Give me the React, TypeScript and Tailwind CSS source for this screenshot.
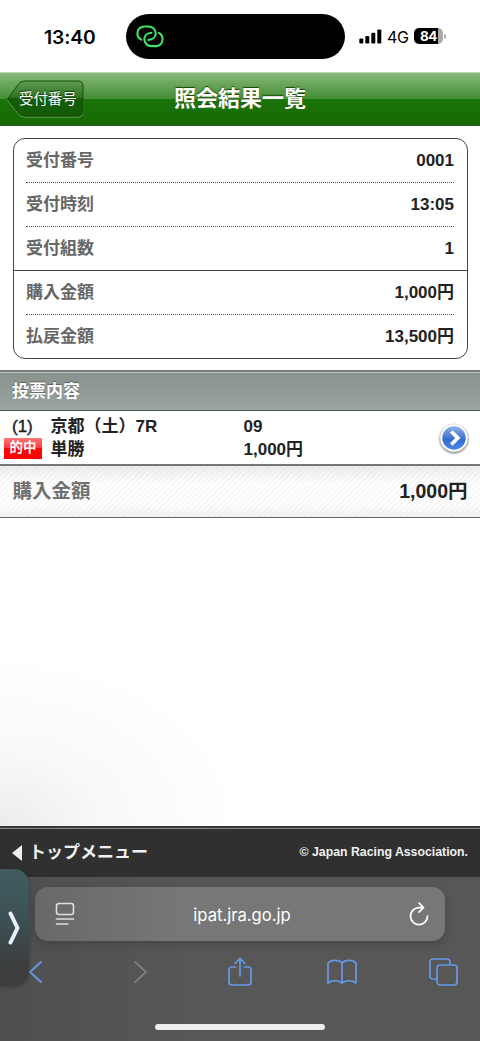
import React from "react";

const JP = "font-['Liberation_Sans','Noto_Sans_CJK_JP',sans-serif]";

function StatusBar() {
  return (
    <div className="flex h-[72px] shrink-0 items-start bg-white pt-3.5 font-['Inter',sans-serif]">
      <div className="flex h-[46px] w-[126px] items-center pl-[44px] text-[19.3px] font-semibold tracking-[-0.1px] text-black">
        13:40
      </div>
      <div className="flex h-[45px] w-[219px] items-center rounded-full bg-black pl-[10px]">
        <svg width="28" height="23" viewBox="0 0 28 23" fill="none" stroke="#3ce468" strokeWidth="2.1" strokeLinecap="round">
          <path d="M5.200 14.700C2.900 13.400 1.400 11 1.400 8.400C1.400 4.400 4.300 1.500 8.300 1.500H12.600C16.600 1.500 19.700 4.500 19.700 8.300C19.700 11.800 16.800 14.600 12.600 14.900" />
          <path d="M22.800 7.900C25.100 9.200 26.600 11.600 26.600 14.200C26.600 18.200 23.700 21.100 19.700 21.100H15.400C11.400 21.100 8.300 18.100 8.300 14.300C8.300 10.800 11.200 8 15.400 7.700" />
        </svg>
      </div>
      <div className="flex h-[44px] items-center pl-[14px]">
        <svg width="23" height="15" viewBox="0 0 23 15" fill="black">
          <rect x="0.3" y="9.4" width="4" height="5" rx="1.2" />
          <rect x="6.3" y="6.9" width="4" height="7.5" rx="1.2" />
          <rect x="12.3" y="3.8" width="4" height="10.6" rx="1.2" />
          <rect x="18.3" y="0.4" width="4" height="14" rx="1.2" />
        </svg>
        <span className="mt-px ml-[5px] w-[27px] text-[16px] tracking-[-0.3px] text-black">4G</span>
        <div className="flex h-4 w-[29px] items-center justify-center rounded-[5px] bg-[linear-gradient(90deg,#000_0_84%,#aaa_84%)] text-[13.500px] font-bold tracking-[-0.4px] text-white">
          84
        </div>
        <span className="ml-px h-[5px] w-[2px] rounded-r-full bg-[#aaa]" />
      </div>
    </div>
  );
}

function Header() {
  return (
    <header className="relative flex h-[54px] shrink-0 items-center justify-center border-t border-b border-t-[#bddab3] border-b-[#2d5227] bg-[linear-gradient(180deg,#87b979_0%,#458d35_50%,#1a750b_50%,#166900_100%)]">
      <svg className="absolute top-[7px] left-[6px]" width="79" height="39" viewBox="0 0 79 39">
        <defs>
          <linearGradient id="back" x1="0" y1="0" x2="0" y2="1">
            <stop offset="0" stopColor="#5f9b50" />
            <stop offset="0.49" stopColor="#2d701f" />
            <stop offset="0.5" stopColor="#135c06" />
            <stop offset="1" stopColor="#145b05" />
          </linearGradient>
        </defs>
        <path d="M1.500 19L13 3.500Q15.500 1 19 1H72Q77 1 77 6V31Q77 36 72 36H19Q15.500 36 13 33.500Z" fill="none" stroke="#68a35c" transform="translate(0 1.200)" />
        <path d="M1.500 19L13 3.500Q15.500 1 19 1H72Q77 1 77 6V31Q77 36 72 36H19Q15.500 36 13 33.500Z" fill="url(#back)" stroke="#174a0f" />
      </svg>
      <span className="absolute top-[15px] left-[19px] text-[14.400px] leading-[22px] text-white [text-shadow:0_-1px_0_#123f0b]">受付番号</span>
      <h1 className="-mt-px text-[22px] font-bold text-white [text-shadow:0_-1px_1px_#12440b]">照会結果一覧</h1>
    </header>
  );
}

function InfoRow({ label, value, line }: { label: string; value: string; line: "none" | "dotted" | "solid" }) {
  return (
    <div className={line === "solid" ? "border-b border-[#444]" : ""}>
      <div className={`mx-[12.500px] flex items-center justify-between text-[17px] leading-6 font-bold ${line === "solid" ? "h-[43px]" : line === "dotted" ? "h-11 border-b border-dotted border-[#555]" : "h-[43px]"}`}>
        <span className="pt-px text-[#666]">{label}</span>
        <span className="pt-px text-[#222]">{value}</span>
      </div>
    </div>
  );
}

function BetRow() {
  return (
    <div className="flex h-[53px] shrink-0 items-center bg-white text-[17px] leading-[23px] font-bold text-[#222]">
      <div className="flex h-[46px] w-[50.500px] flex-col">
        <span className="pl-3 font-medium [-webkit-text-stroke:0.4px_#222]">(1)</span>
        <span className="ml-1 flex h-[21px] w-[38px] items-center justify-center bg-[linear-gradient(180deg,#ff7777_0%,#ff3838_48%,#ff0505_50%,#f00_100%)] text-[13.500px] leading-5 text-white">的中</span>
      </div>
      <div className="w-[193px]">
        <div>京都（土）7R</div>
        <div>単勝</div>
      </div>
      <div className="flex-1">
        <div>09</div>
        <div>1,000円</div>
      </div>
      <svg className="mr-2.5" width="32" height="34" viewBox="0 0 32 34">
        <defs>
          <linearGradient id="orb" x1="0" y1="0" x2="0" y2="1">
            <stop offset="0" stopColor="#8eaee9" />
            <stop offset="0.5" stopColor="#4674d2" />
            <stop offset="0.55" stopColor="#2f69d2" />
            <stop offset="1" stopColor="#4b8ae8" />
          </linearGradient>
          <radialGradient id="halo">
            <stop offset="0.82" stopColor="#777" stopOpacity="0.750" />
            <stop offset="1" stopColor="#777" stopOpacity="0" />
          </radialGradient>
        </defs>
        <circle cx="16" cy="18" r="16" fill="url(#halo)" />
        <circle cx="16" cy="17" r="13.800" fill="white" />
        <circle cx="16" cy="17" r="11.700" fill="url(#orb)" />
        <path d="M13.300 10.500L19.800 17L13.300 23.500" fill="none" stroke="white" strokeWidth="3.800" />
      </svg>
    </div>
  );
}

function Footer() {
  return (
    <footer className="flex h-[51px] shrink-0 items-center justify-between border-t-2 border-[#383838] bg-[linear-gradient(180deg,#8a8a8a_0_1px,#303030_1px)] px-3 font-bold text-[#f0f0f0]">
      <div className="flex items-center">
        <svg width="10" height="16" viewBox="0 0 10 16" fill="#eee"><path d="M10 0V16L0 8Z" /></svg>
        <span className="ml-[7px] text-[17px]">トップメニュー</span>
      </div>
      <span className="text-[12.300px]">© Japan Racing Association.</span>
    </footer>
  );
}

function BrowserBar() {
  return (
    <div className="relative h-[164px] shrink-0 bg-[linear-gradient(90deg,#4f4f4f,#575757_40%)] pt-[10px] font-['Inter',sans-serif]">
      <div className="ml-[35px] flex h-[54px] w-[410px] items-center justify-between rounded-[13px] bg-[linear-gradient(90deg,#686868,#777_35%)] pr-[16px] pl-5 shadow-[0_3px_10px_#0003]">
        <svg width="20" height="24" viewBox="0 0 20 24" fill="none" stroke="#ddd" strokeWidth="1.600" strokeLinecap="round">
          <rect x="1.500" y="1.500" width="17" height="11" rx="2.500" />
          <path d="M1.500 17H18.500M1.500 22H13" />
        </svg>
        <span className="pt-0.5 text-[16.600px] text-white">ipat.jra.go.jp</span>
        <svg width="20" height="24" viewBox="0 0 20 24" fill="none" stroke="white" strokeWidth="1.700" strokeLinecap="round" strokeLinejoin="round">
          <path d="M14.300 5.600H10A8.500 8.500 0 1 0 18.500 14.100M10 1L14.500 5.600L10 10.100" />
        </svg>
      </div>
      <div className="mt-[16px] flex h-[30px] items-center">
        <div className="flex w-[71px] justify-center">
          <svg width="15" height="24" viewBox="0 0 15 24" fill="none" stroke="#6798e5" strokeWidth="1.900" strokeLinecap="round"><path d="M13 2L2 12L13 22" /></svg>
        </div>
        <div className="flex w-[138px] justify-center">
          <svg width="15" height="24" viewBox="0 0 15 24" fill="none" stroke="#858585" strokeWidth="1.600" strokeLinecap="round"><path d="M2 2L13 12L2 22" /></svg>
        </div>
        <div className="flex w-[62px] justify-center">
          <svg width="24" height="30" viewBox="0 0 24 30" fill="none" stroke="#6798e5" strokeWidth="1.700" strokeLinecap="round" strokeLinejoin="round">
            <path d="M7.500 10H4Q1 10 1 13V25Q1 28 4 28H20Q23 28 23 25V13Q23 10 20 10H16.500M12 19V1.500M7 6.500L12 1.500L17 6.500" />
          </svg>
        </div>
        <div className="flex w-[141px] justify-center">
          <svg width="30" height="26" viewBox="0 0 30 26" fill="none" stroke="#6798e5" strokeWidth="1.700" strokeLinejoin="round">
            <path d="M15 4C12 .5 4 .5 1 4V24C5 21 11 21 15 24C19 21 25 21 29 24V4C26 .5 18 .5 15 4ZM15 4V24" />
          </svg>
        </div>
        <div className="flex w-[62px] justify-center">
          <svg width="29" height="28" viewBox="0 0 29 28" fill="none" stroke="#6798e5" strokeWidth="1.700">
            <path d="M8 21H4Q1 21 1 18V4Q1 1 4 1H18Q21 1 21 4V7" />
            <rect x="8" y="7" width="20" height="20" rx="3" />
          </svg>
        </div>
      </div>
      <div className="absolute -top-2 left-0 flex h-[117px] w-[29px] items-center justify-center rounded-r-[15px] bg-[linear-gradient(180deg,#415d60_0%,#3c5053_45%,#3c3e3f_80%)] shadow-[0_1px_4px_#0004]">
        <svg width="13" height="34" viewBox="0 0 13 34" fill="none" stroke="#e8f2ff" strokeWidth="4" strokeLinecap="round" strokeLinejoin="round"><path d="M2.500 2.500L9.500 17L2.500 31.500" /></svg>
      </div>
      <div className="mx-auto mt-[37px] h-[6px] w-[170px] rounded-full bg-[#eee]" />
    </div>
  );
}

export default function App() {
  return (
    <div className={`flex h-[1041px] w-[480px] flex-col overflow-hidden bg-white ${JP}`}>
      <StatusBar />
      <Header />
      <section className="h-[244px] shrink-0 px-[12.500px] pt-3">
        <div className="h-[221px] rounded-[12px] border border-[#444] bg-white">
          <InfoRow label="受付番号" value="0001" line="dotted" />
          <InfoRow label="受付時刻" value="13:05" line="dotted" />
          <InfoRow label="受付組数" value="1" line="solid" />
          <InfoRow label="購入金額" value="1,000円" line="dotted" />
          <InfoRow label="払戻金額" value="13,500円" line="none" />
        </div>
      </section>
      <h2 className="flex h-[41px] shrink-0 items-center border-t-2 border-b border-t-[#777d79] border-b-[#555] bg-[linear-gradient(180deg,#bbc0bd_0_1px,#89928d_1px,#9aa5a0_100%)] px-3 pt-px text-[17px] font-bold text-white [text-shadow:0_-1px_1px_#606763]">
        投票内容
      </h2>
      <BetRow />
      <div className="h-[54px] shrink-0 border-t-2 border-b border-t-[#777] border-b-[#666] bg-[linear-gradient(180deg,#00000012,#0000_35%,#0000_75%,#0000000c),repeating-linear-gradient(135deg,#fff_0_2px,#f8f8f8_2px_4px)]">
        <div className="flex h-full items-center justify-between px-[12.500px] pt-px text-[19.500px] font-bold">
          <span className="text-[#707070]">購入金額</span>
          <span className="text-[#222]">1,000円</span>
        </div>
      </div>
      <div className="min-h-0 flex-1 bg-[radial-gradient(ellipse_240px_170px_at_0_100%,#ececec_0%,#f9f9f9_45%,#fff_100%)]" />
      <Footer />
      <BrowserBar />
    </div>
  );
}
